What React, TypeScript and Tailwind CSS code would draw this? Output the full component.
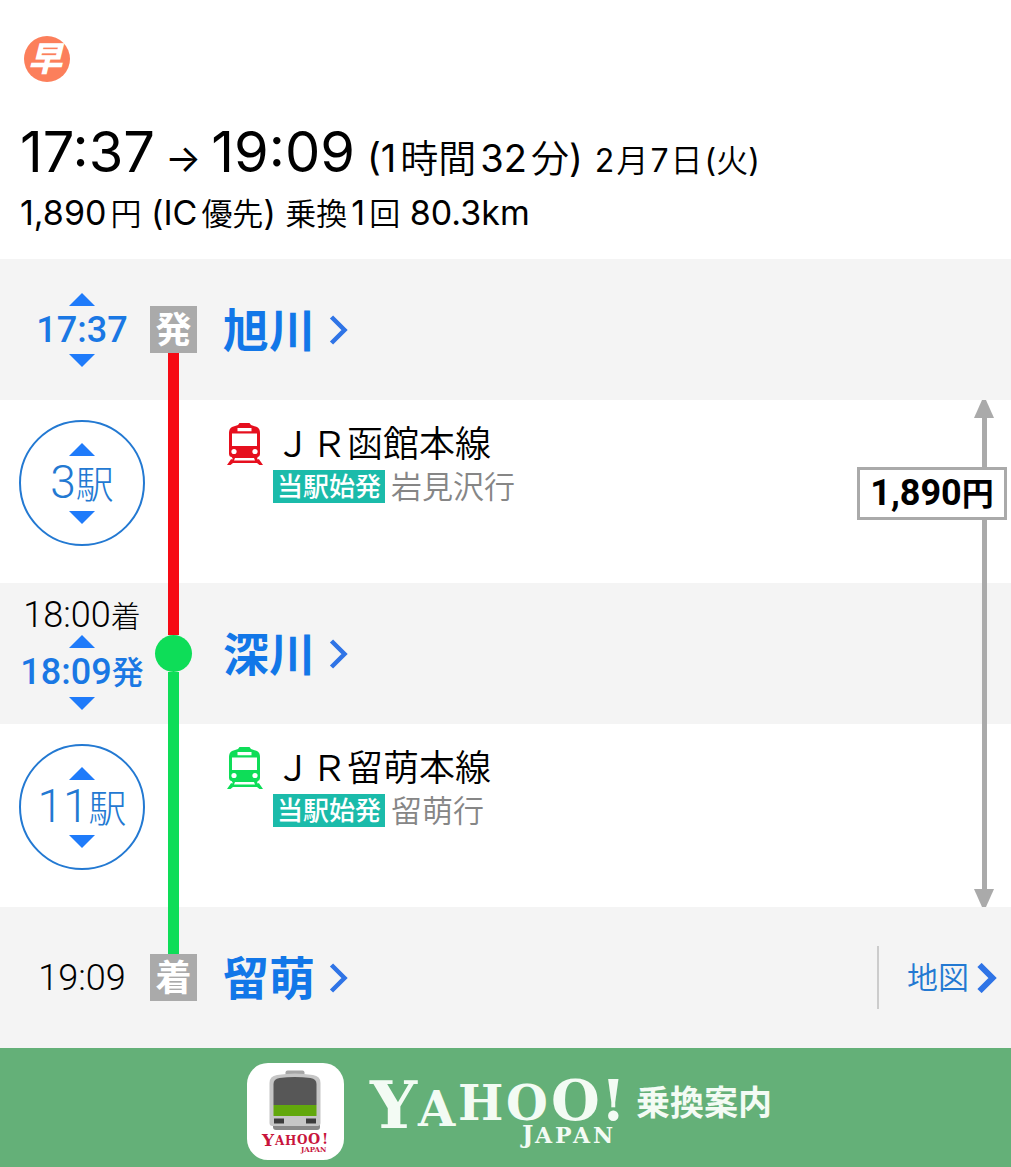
import type { ReactNode } from "react";

const FONT = "font-['Inter','Noto_Sans_CJK_JP',sans-serif]";
const FONT_DIGITS = "font-['Roboto','Noto_Sans_CJK_JP',sans-serif]";

function Triangle({ down = false }: { down?: boolean }) {
  return (
    <svg width="26" height="13" viewBox="0 0 26 13" fill="#1f7bfa" aria-hidden="true">
      <path d={down ? "M0 0h26L13 13z" : "M0 13h26L13 0z"} />
    </svg>
  );
}

function Chevron({ bold = false }: { bold?: boolean }) {
  return (
    <svg width="20" height="30" viewBox="0 0 20 30" fill="none" stroke="#2f74e6" aria-hidden="true">
      <path d="M2.5 2 15.5 15 2.5 28" strokeWidth={bold ? 6 : 4.5} />
    </svg>
  );
}

function TrainIcon({ color }: { color: string }) {
  return (
    <svg width="36" height="44" viewBox="0 0 36 44" aria-hidden="true">
      <path
        fill={color}
        d="M11 3 12.500 1h10l1.500 2 6 2Q33 6.500 33 11v20.500q0 3.500-3 3.500H5q-3 0-3-3.500V11Q2 6.500 5 5z"
      />
      <path fill="#fff" d="M10.500 6h14v3.200h-14zM5 11.500h25V24H5z" />
      <circle cx="7" cy="29.500" r="2.600" fill="#fff" />
      <circle cx="28" cy="29.500" r="2.600" fill="#fff" />
      <path fill={color} d="M4 34h27l-1 3.200h2L36 43h-3.500l-2.500-2H6l-2.500 2H0l4-5.800h2zM8 36l-1 2.500h21L27 36z" fillRule="evenodd" />
    </svg>
  );
}

function AppIcon() {
  return (
    <svg width="97" height="97" viewBox="0 0 97 97" role="img" aria-label="Yahoo! JAPAN">
      <rect width="97" height="97" rx="21" fill="#fff" />
      <rect x="38.500" y="7.500" width="19" height="8" rx="2" fill="#a6a6a6" />
      <path fill="#888" d="M26 60h47v4q0 3-3 3H29q-3 0-3-3z" />
      <path
        fill="#c6c6c6"
        d="M22.500 20Q22.500 13 30 12q18-3 36 0 7.500 1 7.500 8v40q0 3-3 3h-45q-3 0-3-3z"
      />
      <path fill="#575757" d="M26.500 21q0-5 6-6 15-2 31 0 6 1 6 6v21h-43z" />
      <path fill="#62a80c" d="M26.500 42h43v11h-43z" />
      <path fill="#3c3c3c" d="M27 55.500h10v5H27zM59 55.500h10v5H59z" />
      <g fill="#c8143c" fontFamily="DejaVu Serif" fontWeight="700">
        <text x="15" y="83" fontSize="17">Y</text>
        <text x="28 38" y="82" fontSize="12">AH</text>
        <text x="50" y="81" fontSize="12">O</text>
        <text x="61 75" y="81" fontSize="14">O!</text>
        <text x="54" y="89" fontSize="7">JAPAN</text>
      </g>
    </svg>
  );
}

function YahooLogo() {
  return (
    <svg width="260" height="92" viewBox="0 0 260 92" fill="#f3fbf4" role="img" aria-label="YAHOO! JAPAN">
      <g fontFamily="DejaVu Serif" fontWeight="700">
        <text x="2" y="65" fontSize="66">Y</text>
        <text x="50" y="63" fontSize="48">A</text>
        <text x="90" y="57" fontSize="48">H</text>
        <text x="138" y="57" fontSize="48">O</text>
        <text x="183" y="57" fontSize="56">O</text>
        <text x="233" y="57" fontSize="56">!</text>
        <text x="154" y="80" fontSize="24">J</text>
        <text x="167 187 205 225" y="80" fontSize="22">APAN</text>
      </g>
    </svg>
  );
}

// kanji next to digits get a little air and a lighter weight
function Kanji({ children, className = "mx-1" }: { children: string; className?: string }) {
  return <span className={`font-[350] ${className}`}>{children}</span>;
}

function TimeStepper({ children }: { children: ReactNode }) {
  return (
    <div className="flex flex-col items-center font-medium leading-[48px] text-[#1a78e4]">
      <button type="button" aria-label="1本前" className="block">
        <Triangle />
      </button>
      <span className={`whitespace-nowrap text-[36px] ${FONT_DIGITS}`}>{children}</span>
      <button type="button" aria-label="1本後" className="block">
        <Triangle down />
      </button>
    </div>
  );
}

type StationProps = {
  name: string;
  time: ReactNode;
  marker: ReactNode;
  above?: string;
  below?: string;
  children?: ReactNode;
};

function StationRow({ name, time, marker, above = "", below = "", children }: StationProps) {
  return (
    <div className="grid h-[141px] grid-cols-[150px_47px_1fr] bg-[#f4f4f4]">
      <div className="flex flex-col items-center justify-center pl-3.5">{time}</div>
      <div className="flex flex-col items-center">
        <div className={`w-[11px] flex-1 ${above}`} />
        {marker}
        <div className={`w-[11px] flex-1 ${below}`} />
      </div>
      <div className="flex items-center justify-between pl-[26px]">
        <a href="#station" className="flex items-center gap-3.5 text-[46px] font-bold leading-none text-[#1277e8]">
          {name}
          <Chevron />
        </a>
        {children}
      </div>
    </div>
  );
}

function Marker({ children }: { children: string }) {
  return (
    <span className="flex size-[47px] items-center justify-center bg-[#aaa] text-[36px] font-bold leading-none text-white">
      {children}
    </span>
  );
}

type LineProps = { stops: number; bar: string; color: string; line: string; bound: string };

function LineRow({ stops, bar, color, line, bound }: LineProps) {
  return (
    <div className="grid h-[183px] grid-cols-[150px_47px_1fr] bg-white">
      <div className="flex justify-center pl-3.5 pt-5">
        <button
          type="button"
          className={`flex size-[126px] flex-col items-center justify-center rounded-full border-2 border-[#2379d2] text-[46px] font-light leading-[52px] text-[#2379d2] ${FONT_DIGITS}`}
        >
          <Triangle />
          <span className="whitespace-nowrap">
            {stops}
            <span className="text-[38px]">駅</span>
          </span>
          <Triangle down />
        </button>
      </div>
      <div className={`mx-auto w-[11px] ${bar}`} />
      <div className="flex items-start gap-2.5 pl-[30px] pt-[22px]">
        <TrainIcon color={color} />
        <div>
          <p className="pl-0.5 text-[36px] font-[350] leading-[44px]">{line}</p>
          <p className="mt-1 flex items-center gap-1.5 text-[31px] font-[350] leading-[33px] text-[#868686]">
            <span className="bg-[#1bbbaa] px-1 text-[26px] font-medium text-white">当駅始発</span>
            {bound}
          </p>
        </div>
      </div>
    </div>
  );
}

function FareArrow() {
  return (
    <div className="pointer-events-none absolute inset-y-0 right-1 flex w-[150px] flex-col">
      <div className="flex h-[67px] flex-col items-center self-end pr-[13px]">
        <svg width="20" height="18" viewBox="0 0 20 18" fill="#aaa" aria-hidden="true">
          <path d="M8 0h4l8 18H0z" />
        </svg>
        <div className="w-[5px] flex-1 bg-[#aaa]" />
      </div>
      <p
        className={`border-3 border-[#aaa] bg-white text-center text-[36px] font-bold leading-[46px] ${FONT_DIGITS}`}
      >
        1,890<span className="text-[32px]">円</span>
      </p>
      <div className="flex flex-1 flex-col items-center self-end pr-[13px]">
        <div className="w-[5px] flex-1 bg-[#aaa]" />
        <svg width="20" height="18" viewBox="0 0 20 18" fill="#aaa" aria-hidden="true">
          <path d="M0 0h20l-8 18H8z" />
        </svg>
      </div>
    </div>
  );
}

export default function App() {
  return (
    <main className={`min-w-[800px] bg-white text-black ${FONT}`}>
      <header className="h-[259px] px-5 pt-9">
        <span className="ml-1 flex size-[46px] items-center justify-center rounded-full bg-[#fc7f5b] pr-1 text-[34px] font-black italic leading-none text-white">
          早
        </span>
        <h1 className="mt-10 flex items-baseline whitespace-nowrap text-[56px] leading-[60px]">
          17:37
          <span className="mx-2.5 text-[38px]">→</span>
          19:09
          <span className="ml-3 text-[38px]">
            (1<Kanji>時間</Kanji>32<Kanji className="ml-1">分</Kanji>)
          </span>
          <span className="ml-3 text-[32px]">
            2<Kanji className="mx-0.5">月</Kanji>7<Kanji className="mx-0.5">日</Kanji>(
            <Kanji className="">火</Kanji>)
          </span>
        </h1>
        <p className="text-[34px] leading-[44px]">
          1,890<Kanji className="ml-1 text-[31px]">円</Kanji> (IC
          <Kanji className="ml-1 text-[31px]">優先</Kanji>){" "}
          <Kanji className="mr-1 text-[31px]">乗換</Kanji>1
          <Kanji className="ml-1 text-[31px]">回</Kanji> 80.3km
        </p>
      </header>

      <section aria-label="経路">
        <StationRow
          name="旭川"
          time={<TimeStepper>17:37</TimeStepper>}
          marker={<Marker>発</Marker>}
          below="bg-[#f60a14]"
        />
        <div className="relative">
          <LineRow stops={3} bar="bg-[#f60a14]" color="#e60f1e" line="ＪＲ函館本線" bound="岩見沢行" />
          <StationRow
            name="深川"
            time={
              <>
                <span className={`whitespace-nowrap text-[36px] font-light leading-[36px] ${FONT_DIGITS}`}>
                  18:00<span className="text-[30px]">着</span>
                </span>
                <TimeStepper>
                  18:09<span className="text-[32px]">発</span>
                </TimeStepper>
              </>
            }
            marker={<span className="size-[37px] rounded-full bg-[#0edd58]" />}
            above="bg-[#f60a14]"
            below="bg-[#0edd58]"
          />
          <LineRow stops={11} bar="bg-[#0edd58]" color="#0edd58" line="ＪＲ留萌本線" bound="留萌行" />
          <FareArrow />
        </div>
        <StationRow
          name="留萌"
          time={<span className={`text-[36px] font-light leading-[36px] ${FONT_DIGITS}`}>19:09</span>}
          marker={<Marker>着</Marker>}
          above="bg-[#0edd58]"
        >
          <a
            href="#map"
            className="mr-3.5 flex h-[63px] items-center gap-2 border-l-2 border-[#ccc] pl-7 text-[31px] font-[350] leading-none text-[#2379d2]"
          >
            地図
            <Chevron bold />
          </a>
        </StationRow>
      </section>

      <footer className="flex h-[119px] items-start justify-center bg-[#64b078] pl-2 pt-[15px]">
        <AppIcon />
        <div className="ml-6 flex items-start">
          <YahooLogo />
          <span className="ml-2 pt-5 text-[34px] font-bold leading-[40px] text-[#f3fbf4]">乗換案内</span>
        </div>
      </footer>
    </main>
  );
}
